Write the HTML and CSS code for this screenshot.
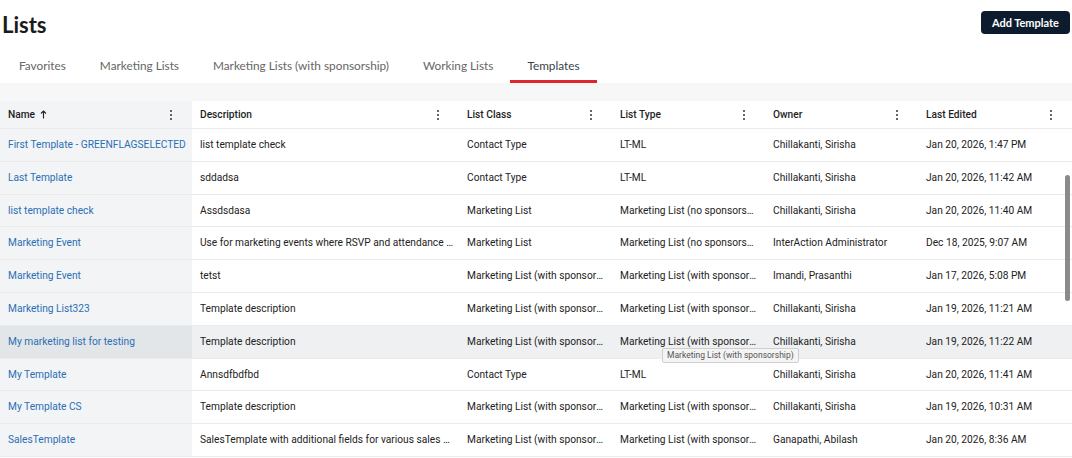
FILE: index.html
```html
<html>
    <head>
        <title>Lists</title>
        <link rel="stylesheet" href="styles.css">
    </head>
    <body>
        <div class="page">
            <div class="topbar">
                <h1>Lists</h1>
                <button class="add">Add Template</button>
            </div>
            <div class="tabs">
                <a class="tab">Favorites</a>
                <a class="tab">Marketing Lists</a>
                <a class="tab">Marketing Lists (with sponsorship)</a>
                <a class="tab">Working Lists</a>
                <a class="tab selected">Templates</a>
            </div>
            <div class="band"></div>

            <div class="grid">
                <div class="row head">
                    <div class="cell name">Name <svg class="sort" width="7" height="9" viewBox="0 0 7 9"><path d="M3.5 8.5V1M1 3.5L3.5 1 6 3.5" fill="none" stroke="#222" stroke-width="1.1"/></svg><span class="menu"><i></i><i></i><i></i></span></div>
                    <div class="cell">Description<span class="menu"><i></i><i></i><i></i></span></div>
                    <div class="cell">List Class<span class="menu"><i></i><i></i><i></i></span></div>
                    <div class="cell">List Type<span class="menu"><i></i><i></i><i></i></span></div>
                    <div class="cell">Owner<span class="menu"><i></i><i></i><i></i></span></div>
                    <div class="cell">Last Edited<span class="menu"><i></i><i></i><i></i></span></div>
                </div>
                <div class="row">
                    <div class="cell name"><a>First Template - GREENFLAGSELECTED</a></div>
                    <div class="cell">list template check</div>
                    <div class="cell">Contact Type</div>
                    <div class="cell">LT-ML</div>
                    <div class="cell">Chillakanti, Sirisha</div>
                    <div class="cell">Jan 20, 2026, 1:47 PM</div>
                </div>
                <div class="row">
                    <div class="cell name"><a>Last Template</a></div>
                    <div class="cell">sddadsa</div>
                    <div class="cell">Contact Type</div>
                    <div class="cell">LT-ML</div>
                    <div class="cell">Chillakanti, Sirisha</div>
                    <div class="cell">Jan 20, 2026, 11:42 AM</div>
                </div>
                <div class="row">
                    <div class="cell name"><a>list template check</a></div>
                    <div class="cell">Assdsdasa</div>
                    <div class="cell">Marketing List</div>
                    <div class="cell">Marketing List (no sponsorship)</div>
                    <div class="cell">Chillakanti, Sirisha</div>
                    <div class="cell">Jan 20, 2026, 11:40 AM</div>
                </div>
                <div class="row">
                    <div class="cell name"><a>Marketing Event</a></div>
                    <div class="cell">Use for marketing events where RSVP and attendance tracking is needed</div>
                    <div class="cell">Marketing List</div>
                    <div class="cell">Marketing List (no sponsorship)</div>
                    <div class="cell">InterAction Administrator</div>
                    <div class="cell">Dec 18, 2025, 9:07 AM</div>
                </div>
                <div class="row">
                    <div class="cell name"><a>Marketing Event</a></div>
                    <div class="cell">tetst</div>
                    <div class="cell">Marketing List (with sponsorship)</div>
                    <div class="cell">Marketing List (with sponsorship)</div>
                    <div class="cell">Imandi, Prasanthi</div>
                    <div class="cell">Jan 17, 2026, 5:08 PM</div>
                </div>
                <div class="row">
                    <div class="cell name"><a>Marketing List323</a></div>
                    <div class="cell">Template description</div>
                    <div class="cell">Marketing List (with sponsorship)</div>
                    <div class="cell">Marketing List (with sponsorship)</div>
                    <div class="cell">Chillakanti, Sirisha</div>
                    <div class="cell">Jan 19, 2026, 11:21 AM</div>
                </div>
                <div class="row hover">
                    <div class="cell name"><a>My marketing list for testing</a></div>
                    <div class="cell">Template description</div>
                    <div class="cell">Marketing List (with sponsorship)</div>
                    <div class="cell">Marketing List (with sponsorship)</div>
                    <div class="cell">Chillakanti, Sirisha</div>
                    <div class="cell">Jan 19, 2026, 11:22 AM</div>
                    <span class="tooltip">Marketing List (with sponsorship)</span>
                </div>
                <div class="row">
                    <div class="cell name"><a>My Template</a></div>
                    <div class="cell">Annsdfbdfbd</div>
                    <div class="cell">Contact Type</div>
                    <div class="cell">LT-ML</div>
                    <div class="cell">Chillakanti, Sirisha</div>
                    <div class="cell">Jan 20, 2026, 11:41 AM</div>
                </div>
                <div class="row">
                    <div class="cell name"><a>My Template CS</a></div>
                    <div class="cell">Template description</div>
                    <div class="cell">Marketing List (with sponsorship)</div>
                    <div class="cell">Marketing List (with sponsorship)</div>
                    <div class="cell">Chillakanti, Sirisha</div>
                    <div class="cell">Jan 19, 2026, 10:31 AM</div>
                </div>
                <div class="row">
                    <div class="cell name"><a>SalesTemplate</a></div>
                    <div class="cell">SalesTemplate with additional fields for various sales activities</div>
                    <div class="cell">Marketing List (with sponsorship)</div>
                    <div class="cell">Marketing List (with sponsorship)</div>
                    <div class="cell">Ganapathi, Abilash</div>
                    <div class="cell">Jan 20, 2026, 8:36 AM</div>
                </div>
                <div class="scrollbar"></div>
            </div>
        </div>
    </body>
</html>
```

FILE: styles.css
```css
body {
    margin: 0;
    background: #fff;
    color: #222;
    overflow: hidden;
}

.page {
    font-family: Lato, sans-serif;
}

.topbar {
    display: flex;
    align-items: center;
    justify-content: space-between;
    height: 48px;
    padding: 0 2px;
}

h1 {
    margin: 0;
    font-size: 22px;
    font-weight: 700;
    color: #1b1b1b;
}

.add {
    background: #0d1b2e;
    color: #fff;
    border: 0;
    border-radius: 4px;
    font-family: Lato, sans-serif;
    font-size: 11px;
    font-weight: 700;
    height: 23px;
    padding: 0 11px;
    margin-top: -3px;
}

.tabs {
    display: flex;
    height: 35px;
    padding-left: 2px;
}

.tab {
    color: #666;
    font-size: 11.8px;
    line-height: 35px;
    padding: 0 17px;
    border-bottom: 3px solid transparent;
    box-sizing: border-box;
    height: 35px;
}

.tab.selected {
    color: #3a3f48;
    border-bottom-color: #e0262c;
}

.band {
    height: 18px;
    background: #f7f7f7;
}

.grid {
    position: relative;
    font-family: Roboto, sans-serif;
    font-size: 10.2px;
}

.row {
    position: relative;
    display: grid;
    grid-template-columns: 192px 267px 153px 153px 153px 154px;
    height: 32.8px;
    border-bottom: 1px solid #ebebeb;
    box-sizing: border-box;
}

.row.head {
    height: 28px;
    font-weight: 500;
    color: #1e1e1e;
}

.cell {
    display: flex;
    align-items: center;
    padding: 0 8px;
    white-space: nowrap;
    overflow: hidden;
    min-width: 0;
}

.row:not(.head) .cell {
    display: block;
    line-height: 32px;
    text-overflow: ellipsis;
    padding-right: 6px;
}

.cell.name {
    background: #f3f4f6;
}

.cell a {
    color: #2a6fb4;
}

.sort {
    margin-left: 5px;
}

.menu {
    margin-left: auto;
    margin-right: 12px;
    display: flex;
    flex-direction: column;
    gap: 2px;
}

.menu i {
    display: block;
    width: 2px;
    height: 2px;
    border-radius: 1px;
    background: #333;
}

.row.hover .cell {
    background: #eef0f2;
}

.row.hover .cell.name {
    background: #e3e6e9;
}

.tooltip {
    position: absolute;
    left: 662px;
    top: 22px;
    background: #f4f4f4;
    border: 1px solid #cfcfcf;
    border-radius: 2px;
    color: #555;
    font-size: 8.5px;
    line-height: 13px;
    padding: 0 4px;
    z-index: 2;
}

.scrollbar {
    position: absolute;
    right: 2px;
    top: 74px;
    width: 5px;
    height: 126px;
    border-radius: 3px;
    background: #8a8a8a;
}
```
